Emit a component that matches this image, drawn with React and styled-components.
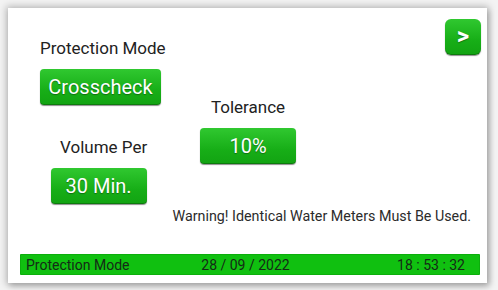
import React from "react"
import styled, { createGlobalStyle } from "styled-components"

const GlobalStyle = createGlobalStyle`
  html, body {
    margin: 0;
    padding: 0;
    background: #f3f3f3;
    font-family: Roboto, "Liberation Sans", sans-serif;
  }
`

const Screen = styled.div`
  width: 498px;
  height: 290px;
  padding: 8px 0 0 8px;
  box-sizing: border-box;
`

const Panel = styled.div`
  width: 479px;
  height: 275px;
  background: #ffffff;
  box-shadow: 0 0 7px 2px rgba(0, 0, 0, 0.22), 2px 3px 6px rgba(0, 0, 0, 0.2);
  display: flex;
  flex-direction: column;
  box-sizing: border-box;
`

const Main = styled.div`
  display: flex;
  align-items: flex-start;
  padding-left: 32px;
`

const LeftColumn = styled.div`
  width: 128px;
  padding-top: 30px;
  display: flex;
  flex-direction: column;
  align-items: flex-start;
`

const MiddleColumn = styled.div`
  margin-left: 32px;
  padding-top: 89px;
`

const Group = styled.div`
  display: flex;
  flex-direction: column;
  align-items: ${p => (p.center ? "center" : "flex-start")};
  gap: ${p => p.gap || 11}px;
  margin-top: ${p => p.top || 0}px;
  margin-left: ${p => p.left || 0}px;
`

const Label = styled.div`
  font-size: 17px;
  line-height: 20px;
  font-weight: 400;
  color: #222222;
  white-space: nowrap;
  margin-left: ${p => p.shift || 0}px;
`

const GreenButton = styled.button`
  width: ${p => p.w}px;
  height: 36px;
  padding: 0;
  border: none;
  border-radius: 4px;
  background: linear-gradient(#30c830, #17ae17 60%, #12a312);
  box-shadow: inset 0 -1px 0 rgba(0, 0, 0, 0.25), 0 1px 1px rgba(0, 0, 0, 0.45);
  color: #ffffff;
  font-family: Roboto, "Liberation Sans", sans-serif;
  font-size: 20px;
  font-weight: 400;
  text-shadow: 0 1px 1px rgba(0, 0, 0, 0.35);
  display: flex;
  align-items: center;
  justify-content: center;
`

const ArrowButton = styled(GreenButton)`
  width: 36px;
  height: 36px;
  border-radius: 6px;
  margin: 11px 6px 0 auto;
  font-size: 24px;
  font-weight: 700;
  padding-bottom: 2px;
`

const Warning = styled.div`
  margin-top: 4px;
  padding-right: 16px;
  text-align: right;
  font-size: 14.3px;
  line-height: 17px;
  color: #2b2b2b;
`

const StatusBar = styled.div`
  margin: auto 7px 8px 12px;
  height: 21px;
  background: #10c010;
  border-radius: 1px;
  box-shadow: inset 0 0 0 1px rgba(0, 120, 0, 0.25);
  display: grid;
  grid-template-columns: 1fr auto 1fr;
  align-items: center;
  padding: 0 15px 0 6px;
  font-size: 14px;
  font-weight: 400;
  color: #142a16;
`

const StatusItem = styled.span`
  justify-self: ${p => p.align || "start"};
  white-space: pre;
`

export default function App() {
  return (
    <>
      <GlobalStyle />
      <Screen>
        <Panel>
          <Main>
            <LeftColumn>
              <Group gap={11}>
                <Label>Protection Mode</Label>
                <GreenButton w={121}>Crosscheck</GreenButton>
              </Group>
              <Group center gap={11} top={32} left={10}>
                <Label shift={10}>Volume Per</Label>
                <GreenButton w={96}>30 Min.</GreenButton>
              </Group>
            </LeftColumn>
            <MiddleColumn>
              <Group center gap={11}>
                <Label>Tolerance</Label>
                <GreenButton w={96}>10%</GreenButton>
              </Group>
            </MiddleColumn>
            <ArrowButton>&gt;</ArrowButton>
          </Main>
          <Warning>Warning! Identical Water Meters Must Be Used.</Warning>
          <StatusBar>
            <StatusItem>Protection Mode</StatusItem>
            <StatusItem align="center">28 / 09 / 2022</StatusItem>
            <StatusItem align="end">18 : 53 : 32</StatusItem>
          </StatusBar>
        </Panel>
      </Screen>
    </>
  )
}
